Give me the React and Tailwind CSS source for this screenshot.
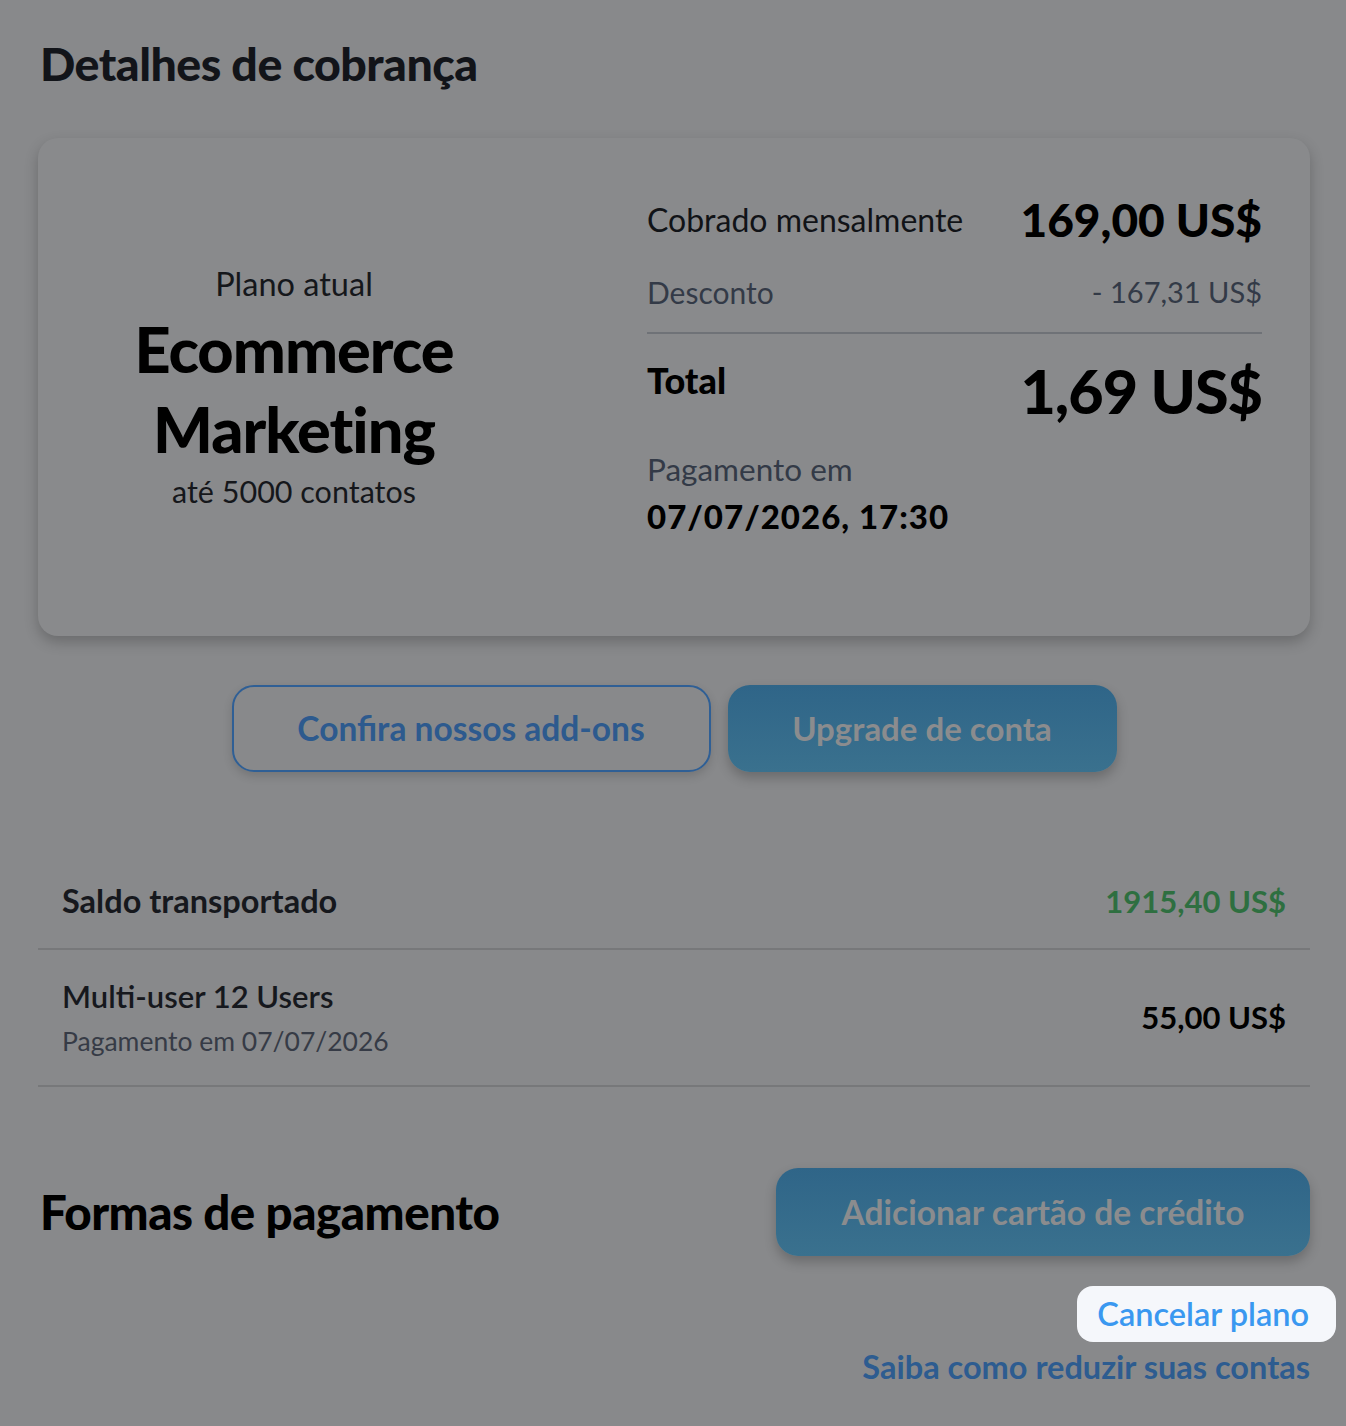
const font = { fontFamily: 'Lato, "Noto Sans", sans-serif' }

function Row({ left, sub, right, rightClass }) {
  return (
    <div className="flex h-[137px] items-center justify-between border-b-2 border-[#77787a] px-6">
      <div>
        <div className="text-[31px] font-semibold leading-[36px] text-[#16181d]">{left}</div>
        {sub ? <div className="mt-[11px] text-[26.5px] leading-[32px] text-[#363b46]">{sub}</div> : null}
      </div>
      <div className={rightClass}>{right}</div>
    </div>
  )
}

export default function App() {
  return (
    <div className="min-h-[1426px] w-full bg-[#88898b] pl-[38px] pr-[36px] pt-[38px]" style={font}>
      <h1 className="ml-[2px] text-[46.5px] font-black leading-[50px] tracking-[-0.5px] text-[#121419]">Detalhes de cobrança</h1>

      <div className="mt-[50px] flex h-[498px] rounded-[20px] bg-[#898a8c] shadow-[0_6px_14px_rgba(0,0,0,0.22)]">
        <div className="flex w-[512px] flex-col items-center justify-center text-center">
          <div className="text-[32.5px] leading-[40px] text-[#15171b]">Plano atual</div>
          <div className="mt-[5px] text-[63px] font-black leading-[80px] tracking-[-1px] text-black">Ecommerce<br />Marketing</div>
          <div className="mt-[2px] text-[30.5px] leading-[40px] text-[#15171b]">até 5000 contatos</div>
        </div>
        <div className="ml-[97px] w-[615px] pt-[56px]">
          <div className="flex h-[52px] items-center justify-between">
            <span className="text-[32px] text-[#111317]">Cobrado mensalmente</span>
            <span className="text-[46px] font-black leading-[52px] text-black">169,00 US$</span>
          </div>
          <div className="mt-[26px] flex h-[40px] items-center justify-between text-[30px] text-[#333a47]">
            <span>Desconto</span>
            <span className="text-[29px]">- 167,31 US$</span>
          </div>
          <div className="mt-[20px] h-[2px] bg-[#6f7277]" />
          <div className="mt-[22px] flex items-start justify-between">
            <span className="pt-[4px] text-[36px] font-black leading-[40px] text-black">Total</span>
            <span className="text-[61px] font-black leading-[70px] tracking-[-1px] text-black">1,69 US$</span>
          </div>
          <div className="mt-[23px] text-[31.5px] leading-[40px] text-[#333a47]">Pagamento em</div>
          <div className="mt-[7px] text-[33px] font-black leading-[40px] tracking-[1px] text-black">07/07/2026, 17:30</div>
        </div>
      </div>

      <div className="mt-[49px] flex justify-center gap-[17px]">
        <button className="h-[87px] w-[479px] rounded-[22px] border-2 border-[#2f5f95] text-[33.5px] font-bold text-[#2d5a8e] shadow-[0_4px_10px_rgba(0,0,0,0.15)]">Confira nossos add-ons</button>
        <button className="h-[87px] w-[389px] rounded-[22px] bg-gradient-to-b from-[#2f6588] to-[#3a718e] text-[33px] font-bold text-[#8b8c8e] shadow-[0_6px_12px_rgba(0,0,0,0.22)]">Upgrade de conta</button>
      </div>

      <div className="mt-[86px]">
        <div className="flex h-[92px] items-center justify-between border-b-2 border-[#77787a] px-6 pb-[4px]">
          <span className="text-[32.5px] font-bold text-[#16181d]">Saldo transportado</span>
          <span className="text-[31px] font-bold text-[#2e6f40]">1915,40 US$</span>
        </div>
        <Row
          left="Multi-user 12 Users"
          sub="Pagamento em 07/07/2026"
          right="55,00 US$"
          rightClass="text-[31px] font-bold text-black"
        />
      </div>

      <div className="mt-[81px] flex items-center justify-between">
        <h2 className="ml-[2px] text-[47.5px] font-black tracking-[-0.5px] text-black">Formas de pagamento</h2>
        <button className="h-[88px] w-[534px] rounded-[22px] bg-gradient-to-b from-[#2f6588] to-[#3a718e] text-[33.5px] font-bold text-[#8b8c8e] shadow-[0_6px_12px_rgba(0,0,0,0.22)]">Adicionar cartão de crédito</button>
      </div>

      <div className="mt-[30px] flex flex-col items-end">
        <div className="-mr-[26px] flex h-[56px] items-center rounded-[16px] bg-[#f5f7fb] pl-[20px] pr-[27px] text-[32.5px] font-semibold text-[#3a98f0]">Cancelar plano</div>
        <div className="mt-[6px] text-[32.5px] font-bold leading-[38px] text-[#2d5c90]">Saiba como reduzir suas contas</div>
      </div>
    </div>
  )
}
